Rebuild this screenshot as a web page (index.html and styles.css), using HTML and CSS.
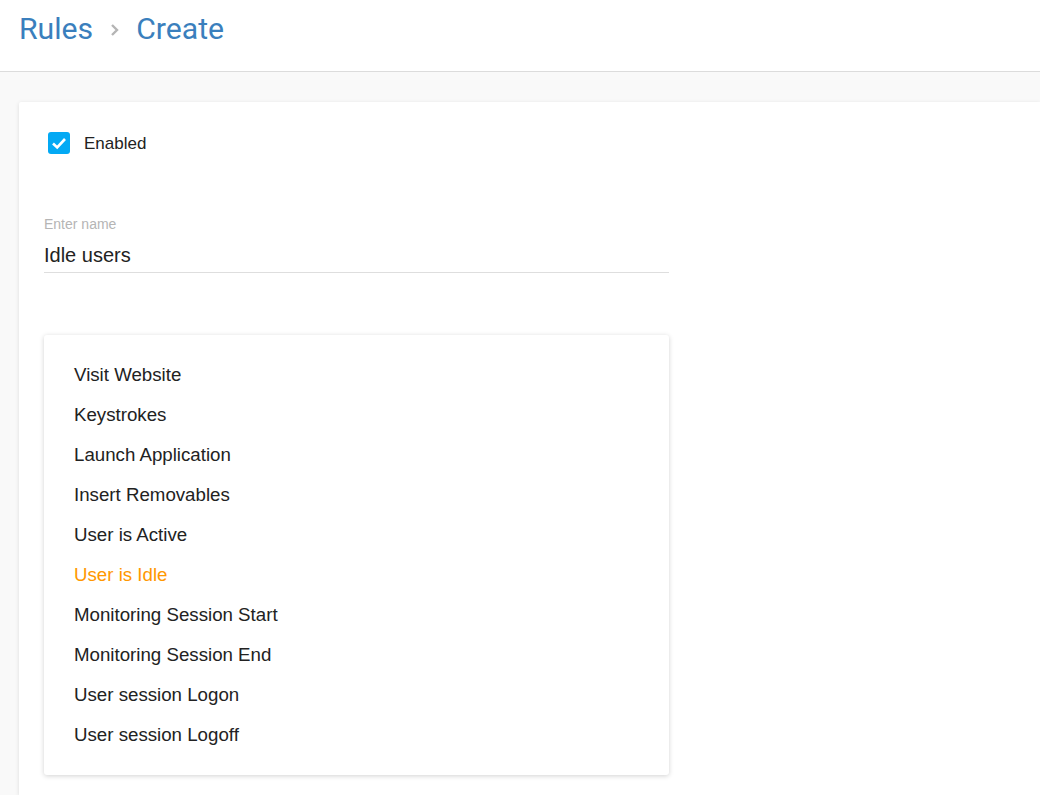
FILE: index.html
```html
<!DOCTYPE html>
<html>
<head>
<meta charset="utf-8">
<link rel="stylesheet" href="styles.css">
</head>
<body>
<header class="topbar">
  <nav class="crumbs">
    <span class="crumb">Rules</span>
    <svg class="chev" width="12" height="14" viewBox="0 0 12 14"><path d="M3 2 L8 7 L3 12" fill="none" stroke="#b5b5b5" stroke-width="2.4"/></svg>
    <span class="crumb">Create</span>
  </nav>
</header>
<main class="content">
  <section class="card">
    <label class="check">
      <span class="box"><svg width="22" height="22" viewBox="0 0 22 22"><path d="M5 11.5 L9.2 15.5 L17 7" fill="none" stroke="#fff" stroke-width="2.6"/></svg></span>
      <span class="check-label">Enabled</span>
    </label>
    <div class="field">
      <div class="field-label">Enter name</div>
      <div class="field-value">Idle users</div>
    </div>
    <ul class="menu">
      <li>Visit Website</li>
      <li>Keystrokes</li>
      <li>Launch Application</li>
      <li>Insert Removables</li>
      <li>User is Active</li>
      <li class="active">User is Idle</li>
      <li>Monitoring Session Start</li>
      <li>Monitoring Session End</li>
      <li>User session Logon</li>
      <li>User session Logoff</li>
    </ul>
  </section>
</main>
</body>
</html>
```
FILE: styles.css
```css
html, body {
  margin: 0;
  padding: 0;
  background: #f9f9f9;
  font-family: "Liberation Sans", Arial, sans-serif;
  overflow: hidden;
  height: 795px;
}
.topbar {
  height: 72px;
  background: #fff;
  border-bottom: 1px solid #dcdcdc;
  box-sizing: border-box;
}
.crumbs {
  display: flex;
  align-items: center;
  padding: 11px 0 0 19px;
  height: 36px;
}
.crumb {
  font-family: Roboto, "Liberation Sans", sans-serif;
  font-size: 30.2px;
  color: #3a7fbd;
  line-height: 36px;
}
.chev {
  margin: 2px 15px 0 16px;
}
.content {
  padding: 30px 0 0 19px;
}
.card {
  background: #fff;
  box-shadow: 0 1px 4px rgba(0,0,0,0.12);
  border-radius: 2px 0 0 0;
  padding: 30px 25px 0 25px;
  height: 693px;
  box-sizing: border-box;
}
.check {
  display: flex;
  align-items: center;
  margin-left: 4px;
}
.box {
  width: 22px;
  height: 22px;
  border-radius: 3px;
  background: #03a9f4;
  display: block;
}
.box svg { display: block; }
.check-label {
  margin-left: 14px;
  font-size: 17px;
  color: #222;
  margin-top: 2px;
}
.field {
  margin-top: 62px;
  width: 625px;
  border-bottom: 1px solid #dedede;
  padding-bottom: 4px;
}
.field-label {
  font-size: 14px;
  color: #b5b5b5;
  line-height: 16px;
}
.field-value {
  font-size: 20px;
  color: #222;
  line-height: 26px;
  margin-top: 10px;
}
.menu {
  list-style: none;
  margin: 62px 0 0 0;
  padding: 20px 0;
  width: 625px;
  background: #fff;
  border-radius: 3px;
  box-shadow: 0 1px 5px rgba(0,0,0,0.18);
}
.menu li {
  height: 40px;
  line-height: 40px;
  padding-left: 30px;
  font-size: 18.7px;
  color: #222;
}
.menu li.active {
  color: #ff9800;
}
```
